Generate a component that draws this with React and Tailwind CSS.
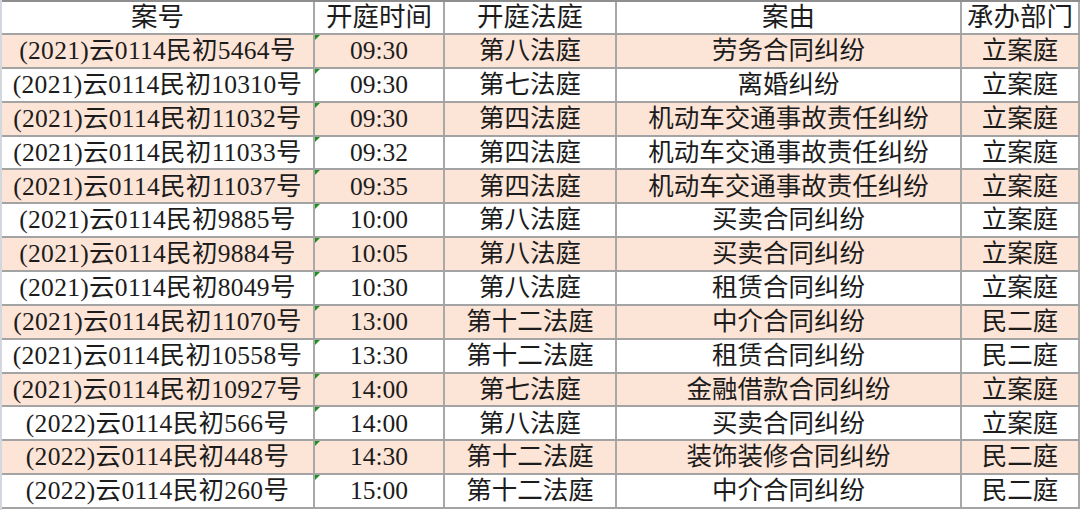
import React from "react";

const rows = [
    ["(2021)云0114民初5464号", "09:30", "第八法庭", "劳务合同纠纷", "立案庭"],
    ["(2021)云0114民初10310号", "09:30", "第七法庭", "离婚纠纷", "立案庭"],
    ["(2021)云0114民初11032号", "09:30", "第四法庭", "机动车交通事故责任纠纷", "立案庭"],
    ["(2021)云0114民初11033号", "09:32", "第四法庭", "机动车交通事故责任纠纷", "立案庭"],
    ["(2021)云0114民初11037号", "09:35", "第四法庭", "机动车交通事故责任纠纷", "立案庭"],
    ["(2021)云0114民初9885号", "10:00", "第八法庭", "买卖合同纠纷", "立案庭"],
    ["(2021)云0114民初9884号", "10:05", "第八法庭", "买卖合同纠纷", "立案庭"],
    ["(2021)云0114民初8049号", "10:30", "第八法庭", "租赁合同纠纷", "立案庭"],
    ["(2021)云0114民初11070号", "13:00", "第十二法庭", "中介合同纠纷", "民二庭"],
    ["(2021)云0114民初10558号", "13:30", "第十二法庭", "租赁合同纠纷", "民二庭"],
    ["(2021)云0114民初10927号", "14:00", "第七法庭", "金融借款合同纠纷", "立案庭"],
    ["(2022)云0114民初566号", "14:00", "第八法庭", "买卖合同纠纷", "立案庭"],
    ["(2022)云0114民初448号", "14:30", "第十二法庭", "装饰装修合同纠纷", "民二庭"],
    ["(2022)云0114民初260号", "15:00", "第十二法庭", "中介合同纠纷", "民二庭"],
];

const headers = ["案号", "开庭时间", "开庭法庭", "案由", "承办部门"];

const rowGrid = "grid grid-cols-[313px_130px_172px_345px_118px] border-b-2 border-[#a3a3a3] leading-none";
const cell = "flex items-center justify-center border-r-2 border-[#a8a8a8] whitespace-nowrap overflow-hidden";

function Row({ data, shaded }) {
    return (
        <div className={`${rowGrid} flex-1 min-h-0 text-[25.5px] ${shaded ? "bg-[#fce4d6]" : "bg-white"}`}>
            {data.map((value, i) => (
                <div key={i} className={`${cell} relative ${i === 0 ? "tracking-[0.3px]" : ""}`}>
                    {i === 1 && (
                        <span className="absolute left-0 top-0 w-0 h-0 border-t-[5px] border-r-[5px] border-t-[#1f8f1f] border-r-transparent" />
                    )}
                    {value}
                </div>
            ))}
        </div>
    );
}

export default function App() {
    return (
        <div className="w-[1080px] h-[510px] overflow-hidden bg-white border-l-2 border-[#d3d7de] font-['Liberation_Serif','Noto_Sans_CJK_SC',serif] text-[#1c1c1c]">
            <div className="h-[509px] flex flex-col border-t-2 border-[#8e8e8e]">
                <div className={`${rowGrid} h-[33px] shrink-0 bg-white text-[26.5px]`}>
                    {headers.map((h) => (
                        <div key={h} className={cell}>
                            {h}
                        </div>
                    ))}
                </div>
                {rows.map((r, i) => (
                    <Row key={i} data={r} shaded={i % 2 === 0} />
                ))}
            </div>
        </div>
    );
}
